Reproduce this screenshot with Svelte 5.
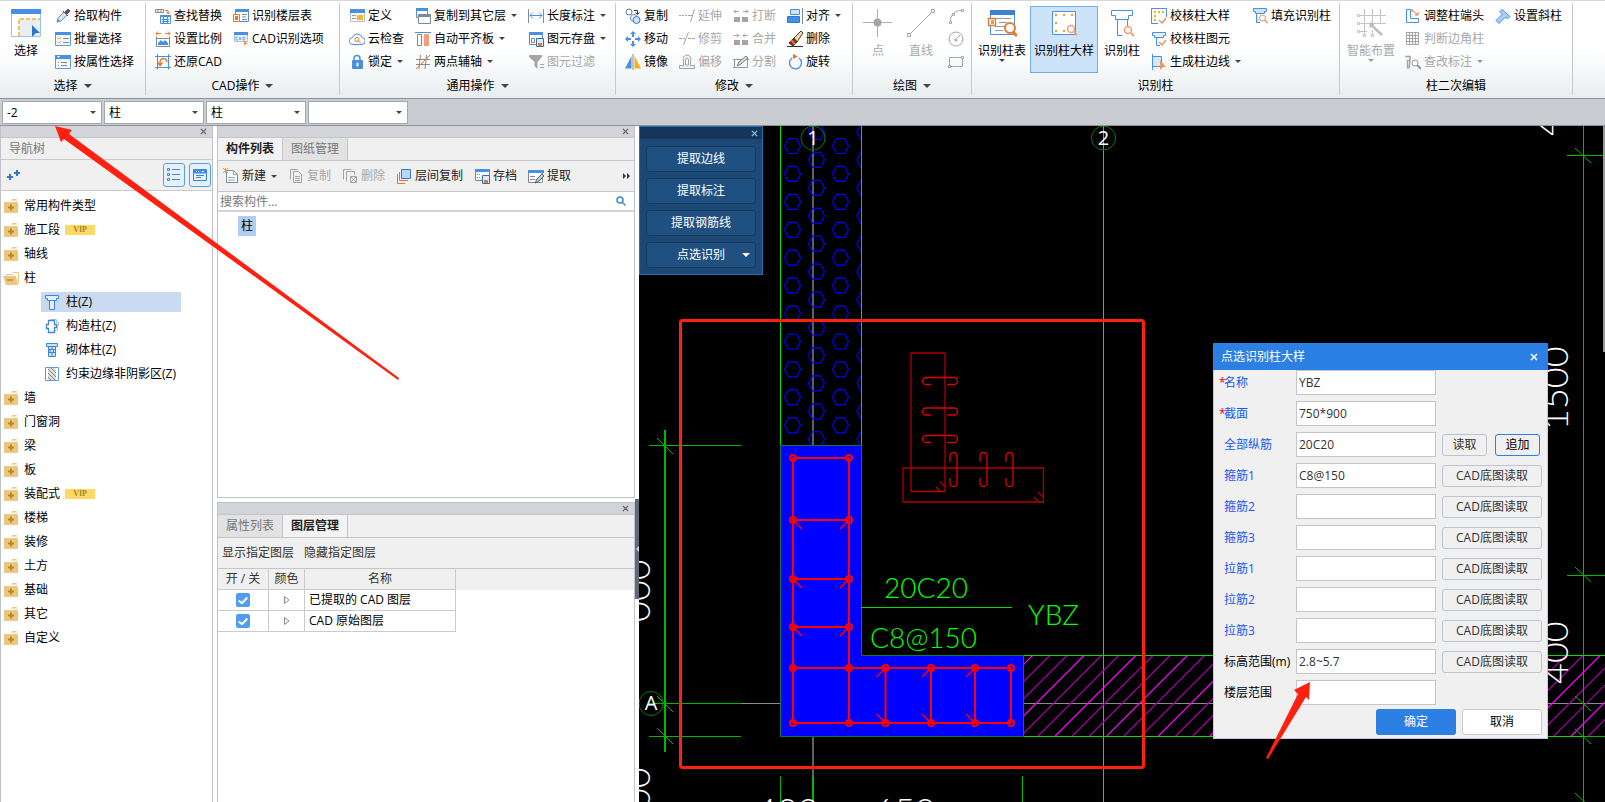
<script lang="ts">
  type Tool = { icon: string; label: string; caret?: boolean; off?: boolean; on?: boolean; w?: number };
  type Group = { title: string; caret?: boolean; w: number; big: Tool[]; cols: Tool[][] };

  // icon artwork, 16x16 unless listed with the 30x30 ones
  const icons: Record<string, string> = {
    picker: `<path d="M2 14l1-4 6-6 3 3-6 6z" fill="#d6e6f5" stroke="#7d8b99"/><path d="M2 14l1-3 2 2z" fill="#4a90e2"/><path d="M8 3l5 5M10 4l3-3 2 2-3 3z" stroke="#555" fill="#555"/>`,
    batch: `<path d="M.5 1.5h15v13H.5z" fill="#f4f9ff" stroke="#5b9bd9"/><path d="M0 1h16v3H0z" fill="#4a90e2"/><path d="M2.5 7l1.2 1.2L6 6M2.5 11l1.2 1.2L6 10" fill="none" stroke="#f0a030"/><path d="M8 7.5h6M8 11.5h6" stroke="#888"/>`,
    attr: `<path d="M.5 1.5h15v13H.5z" fill="#f4f9ff" stroke="#5b9bd9"/><path d="M0 1h16v4H0z" fill="#4a90e2"/><path d="M2 2l1.5 2L5 2z" fill="#fff"/><path d="M3 8.500h1M3 11.500h1M6 8.500h6M6 11.500h6" stroke="#888"/>`,
    find: `<path d="M.5 1.500h8v3h-8zM3 1.500v3M6 1.500v3" fill="none" stroke="#888"/><path d="M10 2.500h3v3M11.500 4l1.500 2 1.500-2" fill="none" stroke="#e8792c"/><path d="M5.500 7.500h10v8h-10z" fill="#eaf3fd" stroke="#4a90e2"/><path d="M5 7h11v2H5z" fill="#4a90e2"/><path d="M7 11.500h7M7 13.500h7M8.500 9v6M12.500 9v6" stroke="#4a90e2"/>`,
    scale: `<path d="M1 2.500h5M3 .5l-2 2 2 2M10 2.500h5M13 .5l2 2-2 2" fill="none" stroke="#e8792c"/><path d="M1.500 5.500v10h13v-10M1.500 7.500h13" fill="none" stroke="#7d8b99"/><path d="M3 14v-2l3-3 2 2 2-2 3 3v2z" fill="#4a90e2"/>`,
    restore: `<path d="M2.500 0v15.500M13.500 0v15.500M0 2.500h16M0 13.500h16" stroke="#4a90e2" fill="none"/><path d="M5 10V8a3.500 3.500 0 0 1 7 0M2.500 8.500L5 11.500l2.500-3" fill="none" stroke="#e8792c" stroke-width="1.500"/>`,
    floor: `<path d="M2.500 1.500h13v12h-13z" fill="#fff" stroke="#4a90e2"/><path d="M2 1h14v3H2z" fill="#4a90e2"/><path d="M.5 6.500h6v7h-6z" fill="#fff" stroke="#e8792c"/><path d="M2 8h3v4H2z" fill="#e8792c"/><path d="M9 6.500h5M9 9h4M9 11.500h5" stroke="#888"/>`,
    cadopt: `<path d="M1.500 1.500h13v9h-13z" fill="#eef5fd" stroke="#9cc3ee"/><path d="M1 1h14v3H1z" fill="#4a90e2"/><path d="M5 6H3v3h2M6 9l1-3 1 3M10 6v3c3 0 3-3 0-3" fill="none" stroke="#7aa9d9"/><path d="M11 9l4 4h-2l-2 2z" fill="#f4935f"/>`,
    define: `<path d="M1.500 2.500h14v11h-14z" fill="#f7f7f7" stroke="#b5bcc4"/><path d="M1 1h15v4H1z" fill="#4a90e2"/><path d="M3 7.500h4M3 10.500h4" stroke="#999"/><path d="M8 7h6v5H8z" fill="#f7b733"/>`,
    cloud: `<path d="M4 13.500a3.500 3.500 0 0 1-.5-7A5 5 0 0 1 13 6.500a3.500 3.500 0 0 1-.5 7z" fill="#fff" stroke="#4a90e2"/><circle cx="8" cy="8.500" r="2" fill="none" stroke="#e8792c"/><path d="M9.500 10l2.500 2.500" stroke="#e8792c"/>`,
    lock: `<path d="M5 8V4.500a3 3 0 0 1 6 0V8" fill="none" stroke="#4a90e2" stroke-width="1.500"/><rect x="3" y="6" width="11" height="9" rx="1" fill="#4a90e2"/><path d="M8 9h1v3H8z" fill="#fff" stroke="#fff"/>`,
    copyfloor: `<path d="M1.500.5h11v9h-11z" fill="#fff" stroke="#4a90e2"/><path d="M1 0h12v3H1z" fill="#4a90e2"/><path d="M3.500 6.500h12v9h-12z" fill="#fff" stroke="#7d8b99"/><path d="M3 6h13v3H3z" fill="#7d8b99"/>`,
    flush: `<path d="M0 1.500h16" stroke="#4a90e2"/><path d="M2.500 3.500h4v11h-4z" fill="#fff" stroke="#888"/><path d="M9 3h5v12H9z" fill="#f99b74"/>`,
    axis: `<path d="M1 5.500h14M1 10.500h14M5.500 1L4 15M11.500 1L10 15" stroke="#888" fill="none"/><path d="M1 15L15 1" stroke="#e8792c"/>`,
    length: `<path d="M.5 1v14M15.500 1v14" stroke="#7d8b99"/><path d="M2 7.500h12M5 4.500l-3 3 3 3M11 4.500l3 3-3 3" fill="none" stroke="#4a90e2"/>`,
    save: `<path d="M1.500 1.500h13v12h-13z" fill="#fff" stroke="#4a90e2"/><path d="M1 1h14v3H1z" fill="#4a90e2"/><path d="M3.500 7.500h3v4h-3z" fill="none" stroke="#888"/><path d="M8.500 7.500h7v8h-7z" fill="#dcebfa" stroke="#2f6fb5"/><path d="M10 12h4v3h-4z" fill="#e8792c"/>`,
    filter: `<path d="M1 1h13v2L9.500 8v7l-3-3V8L1 3z" fill="#a5a5a5"/><path d="M12 10.500h4M12 13.500h4" stroke="#a5a5a5"/>`,
    copy: `<circle cx="4" cy="4" r="3" fill="#fff" stroke="#777"/><path d="M9 2.500h3.500V6M10.500 4.500l2 2 2-2" fill="none" stroke="#333"/><circle cx="9" cy="10" r="3.500" fill="#fff" stroke="#4a90e2"/><circle cx="11.500" cy="12" r="3.500" fill="#cfe3fa" stroke="#2f78c8"/>`,
    move: `<path d="M8 0l3 3H9v3H7V3H5zM8 16l3-3H9v-3H7v3H5zM0 8l3-3v2h3v2H3v2zM16 8l-3-3v2h-3v2h3v2z" fill="#4a90e2"/>`,
    mirror: `<path d="M6.500 2v12.500H0z" fill="#4a90e2"/><path d="M9.500 2v12.500H16z" fill="#f7b021"/><path d="M8 0v16" stroke="#888"/>`,
    extend: `<path d="M0 7.500h9" stroke="#a5a5a5" stroke-dasharray="2 1"/><path d="M9 7.500h5M15.500 1l-4 13" stroke="#a5a5a5"/>`,
    trim: `<path d="M0 7.500h6M9 7.500h7" stroke="#a5a5a5" stroke-dasharray="3 1"/><path d="M9.500 1l-5 13" stroke="#a5a5a5"/>`,
    offset: `<path d="M.5 11.500h4V7a4 4 0 1 1 7 0v4.500h4v3H.5z" fill="#eee" stroke="#a5a5a5"/><path d="M6.500 11V6a1.500 1.500 0 0 1 3 0v5z" fill="#fff" stroke="#a5a5a5"/>`,
    breakit: `<path d="M1 9h6v5H1zM9 9h6v5H9z" fill="#a5a5a5"/><path d="M1 3.500h5M3 1.500l-2 2 2 2M10 3.500h5M13 1.500l2 2-2 2" fill="none" stroke="#a5a5a5"/>`,
    merge: `<path d="M1 9h6v5H1zM9 9h6v5H9z" fill="#a5a5a5"/><path d="M1 4.500h5M4 2.500l2 2-2 2M10 4.500h5M12 2.500l-2 2 2 2" fill="none" stroke="#a5a5a5"/>`,
    split: `<path d="M1.500 5.500h13v8h-13zM0 5.500h3M0 13.500h3M13 5.500h3" fill="none" stroke="#999"/><path d="M4 12l2-4 7-6 2 2-7 6z" fill="#ddd" stroke="#777"/>`,
    align: `<path d="M3.500 1.500h9v5h-9z" fill="#cfe3fa" stroke="#4a90e2"/><path d="M.5 8.500h12v6H.5z" fill="#4a90e2" stroke="#2f78c8"/><path d="M15.500 0v16" stroke="#7d8b99"/>`,
    erase: `<path d="M6 8l8-8 2 2-6 9z" fill="#f3d9a5" stroke="#443"/><path d="M2 12l5-5 3 4-4 4z" fill="#8d2d1a" stroke="#333"/><path d="M4 9l4 4" stroke="#e8792c" stroke-width="2"/><path d="M0 15.500h16" stroke="#333"/>`,
    rotate: `<path d="M5 4a6 6 0 1 0 7 0" fill="none" stroke="#4a90e2" stroke-width="1.300"/><path d="M6 0l5 2.500L6 5z" fill="#e8792c"/>`,
    arc: `<path d="M2.500 13.500C2.500 7 6 2.500 13.500 2.500" fill="none" stroke="#a5a5a5"/><path d="M1.500 13.500h2v2h-2zM4.500 5.500h2v2h-2zM13.500 1.500h2v2h-2z" fill="#fff" stroke="#a5a5a5"/>`,
    circle: `<circle cx="8" cy="8" r="7" fill="none" stroke="#a5a5a5"/><path d="M7 8h2v2H7zM9 7l3-3" fill="#fff" stroke="#a5a5a5"/>`,
    rect: `<path d="M1.500 3.500h13v9h-13z" fill="none" stroke="#a5a5a5"/><path d="M.5 11.500h2v2h-2zM13.500 2.500h2v2h-2z" fill="#fff" stroke="#a5a5a5"/>`,
    checkdetail: `<path d="M.5.5h15v15H.5z" fill="#fff"/><path d="M15.500 9V.5H.5v15H7" fill="none" stroke="#4a90e2"/><path d="M3 3h2v2H3zM7 3h2v2H7zM11 3h2v2h-2zM3 7h2v2H3zM3 11h2v2H3z" fill="#f7b021"/><path d="M8 12l3 3 4-5" fill="none" stroke="#f4935f" stroke-width="1.500"/>`,
    checkcol: `<path d="M1.500 1.500h13v3h-2v2h-9v-2h-2zM5.500 6.500v8H9" fill="#eaf3fd" stroke="#4a90e2"/><path d="M8 11l3 3 4-5" fill="none" stroke="#f4935f" stroke-width="1.500"/>`,
    edge: `<path d="M1.500 0v16M1.500 2.500h9v10h-9" fill="#d6e8fb" stroke="#4a90e2"/><path d="M9 6l6 7h-3l-3 3z" fill="#f4935f"/>`,
    fillcol: `<path d="M1.500.5h13v3h-2v2h-9v-2h-2zM4.500 5.500v9H8" fill="#cfe3fa" stroke="#4a90e2"/><circle cx="10.500" cy="10" r="3" fill="#fff" stroke="#f4935f"/><path d="M12.500 12l3 3" stroke="#f4935f" stroke-width="1.500"/>`,
    colend: `<path d="M1.500 1.500h4v9h8v4h-12z" fill="#fff" stroke="#4a90e2"/><path d="M7 2l6 5M7 1v3M13 4v3h-3" stroke="#e8792c" fill="none"/>`,
    corner: `<path d="M1.500 1.500h12v12h-12zM4.500 1.500v12M7.500 1.500v12M10.500 1.500v12M1.500 4.500h12M1.500 7.500h12M1.500 10.500h12" fill="none" stroke="#a5a5a5"/>`,
    modify: `<path d="M0 2.500h5v4H2.500v8M5 6.500l-1 8" fill="none" stroke="#a5a5a5" stroke-width="1.500"/><circle cx="10" cy="9" r="3" fill="#fff" stroke="#999"/><path d="M12 11l4 4" stroke="#999" stroke-width="2"/>`,
    slant: `<path d="M7 1.500l8 7-2 2-3-1-6 6-3-3 6-6-2-3z" fill="#a9cdf5" stroke="#4a90e2"/>`,
    newdoc: `<path d="M3.500 2.500h7l4 4v8h-11z" fill="#fff" stroke="#7d8b99"/><path d="M10.500 2.500v4h4M5 9.500h7M5 12h7" fill="none" stroke="#9aa5b0"/><path d="M0 0l5 5M5 0L0 5M2.500 0v5" stroke="#f0a030"/>`,
    copydoc: `<path d="M2.500 11.500v-10h7M5.500 3.500h5l3 3v8h-8zM7 8.500h5M7 10.500h5M7 12.500h5" fill="none" stroke="#a5a5a5"/>`,
    deldoc: `<path d="M1.500 11.500v-10h8M4.500 13.500v-10h8v3" fill="none" stroke="#a5a5a5"/><path d="M8.500 8.500h6v6h-6zM9 9l5 5M14 9l-5 5" fill="none" stroke="#a5a5a5"/>`,
    between: `<path d="M5.500 1.500h9v9h-9z" fill="#b9d8f8" stroke="#2f78c8"/><path d="M3.500 4v8.500H12M1.500 6v9.500H9" fill="none" stroke="#e8792c"/>`,
    archive: `<path d="M1.500 1.500h14v11h-14z" fill="#fff" stroke="#4a90e2"/><path d="M1 1h15v3H1z" fill="#4a90e2"/><path d="M3 6.500h4M3 9.500h4" stroke="#888" stroke-dasharray="1 1"/><path d="M8.500 7.500h7v8h-7z" fill="#dcebfa" stroke="#2f6fb5"/><path d="M10 12h4v3h-4z" fill="#e8792c"/>`,
    extract: `<path d="M.5 3.500h14v11H.5z" fill="#fff" stroke="#7d8b99"/><path d="M0 2h16v3H0z" fill="#4a90e2"/><path d="M2 8.500h5M2 11.500h5" stroke="#888"/><path d="M7 15l2-4 5-5 2 2-5 5z" fill="#a9dce8" stroke="#555"/>`,
    folder: `<path d="M8 2.500q0-1.500 3-1.500 4 0 3 1.500z" fill="#e6bd76"/><rect x="1" y="4" width="14" height="11" rx="1" fill="#ecc67f"/><path d="M8 6.500v6M5 9.500h6" stroke="#b98a2a" stroke-width="2"/>`,
    opened: `<path d="M3.500 13V4.500h6l1-2h5v11" fill="#fff" stroke="#ecc67f"/><path d="M0 6h13l2 9H3z" fill="#ecc67f"/><path d="M4 10h6" stroke="#b98a2a" stroke-width="1.500"/>`,
    column: `<path d="M1.500 1.500h13v3h-2v2h-9v-2h-2zM5.500 6.500v9h5v-9" fill="#e1eefb" stroke="#3f86d6"/>`,
    structcol: `<path d="M6.500 1.500h6v3h2v3h-1v5h-3" fill="none" stroke="#9cc3ee"/><path d="M4.500 2.500h6v4h2v3h-2v5h-6v-4h-2v-4h2z" fill="#fff" stroke="#3f86d6" stroke-width="1.300"/>`,
    masonry: `<path d="M2.500 1.500h11v3h-11zM4.500 4.500v10h7v-10M4.500 7.500h7M4.500 10.500h7M8 4.500v3M6 7.500v3M9.500 7.500v3M8 10.500v4" fill="#cfe3fa" stroke="#3f86d6"/>`,
    hatched: `<path d="M1.500 1.500h13v13h-13z" fill="#fff" stroke="#5b9bd9"/><path d="M4 2h8v12H4z" fill="#ddd"/><path d="M4 3l8 8M4 7l7 7M4 11l3 3M7 2l5 5" stroke="#888"/>`,
  };

  const bigIcons: Record<string, string> = {
    select: `<path d="M.5 1.500h29v27H.5z" fill="#fff" stroke="#9cc3ee"/><path d="M0 1h30v5H0z" fill="#4a90e2"/><path d="M8 11h21v17H8z" fill="#e9edf4"/><path d="M8 28V11h21" fill="none" stroke="#f7b021" stroke-width="1.500" stroke-dasharray="4 2"/><path d="M21 17l8 8h-4l-4 4z" fill="#2f78c8"/>`,
    point: `<path d="M14.500 1v11M14.500 18v11M0 14.500h11M18 14.500h11" stroke="#b0b0b0"/><circle cx="14.500" cy="14.500" r="4" fill="#a5a5a5"/>`,
    line: `<path d="M3 27L27 3" stroke="#a5a5a5"/><path d="M1.500 25.500h3v3h-3zM25.500 1.500h3v3h-3z" fill="#fff" stroke="#a5a5a5"/>`,
    coltable: `<path d="M3.500 2.500h24v24h-24z" fill="#fff" stroke="#4a90e2"/><path d="M3 2h25v5H3z" fill="#3f80cf"/><path d="M9 10.500h15M12 14.500h8M8 18.500h10M8 22.500h8" stroke="#999"/><path d="M1.500 10.500h7v7h-7zM4 13h3M4 15h3" fill="#fff" stroke="#e8792c" stroke-width="1.300"/><circle cx="23" cy="20" r="5" fill="#fff" stroke="#e8792c" stroke-width="2"/><path d="M26 24l4 4" stroke="#e8792c" stroke-width="3"/>`,
    coldetail: `<path d="M3.500 3.500h23v23h-23z" fill="#fff" stroke="#4a90e2"/><path d="M6 6h2v2H6zM14 6h2v2h-2zM22 6h2v2h-2zM6 14h2v2H6zM6 22h2v2H6zM14 22h2v2h-2z" fill="#f0a030"/><circle cx="22" cy="21" r="3.500" fill="#fff" stroke="#f99b74" stroke-width="1.500"/><path d="M25 24l3 3" stroke="#f99b74" stroke-width="2"/>`,
    colbig: `<path d="M4.500 2.500h21v5h-4v4h-13v-4h-4z" fill="#fff" stroke="#4a90e2"/><path d="M10.500 11.500v16h5M20.500 11.500v7" fill="none" stroke="#4a90e2"/><circle cx="21" cy="22" r="3.500" fill="#fff" stroke="#f99b74" stroke-width="1.500"/><path d="M24 25l3 3" stroke="#f99b74" stroke-width="2"/>`,
    smart: `<path d="M3 7.500h27M3 15.500h27M3 23.500h8M8.500 1v26M16.500 1v14M24.500 1v14M16.500 22v5" stroke="#c4c4c4" fill="none"/><path d="M1.500 6.500h2v2h-2zM1.500 14.500h2v2h-2zM1.500 22.500h2v2h-2zM7.500 26.500h2v2h-2zM15.500 26.500h2v2h-2z" fill="#fff" stroke="#c4c4c4"/><path d="M11 15l3 1 1-3 1 3 3-1-1.500 2.500L27 26l-2 2-9-9-3 1 1-3z" fill="#bcbcbc"/>`,
  };

  const t = (icon: string, label: string, extra: Partial<Tool> = {}): Tool => ({ icon, label, ...extra });
  const caret = { caret: true };
  const off = { off: true };

  const groups: Group[] = [
    {
      title: "选择", caret: true, w: 146,
      big: [t("select", "选择", { w: 44 })],
      cols: [[t("picker", "拾取构件"), t("batch", "批量选择"), t("attr", "按属性选择")]],
    },
    {
      title: "CAD操作", caret: true, w: 194, big: [],
      cols: [
        [t("find", "查找替换"), t("scale", "设置比例"), t("restore", "还原CAD")],
        [t("floor", "识别楼层表"), t("cadopt", "CAD识别选项")],
      ],
    },
    {
      title: "通用操作", caret: true, w: 276, big: [],
      cols: [
        [t("define", "定义"), t("cloud", "云检查"), t("lock", "锁定", caret)],
        [t("copyfloor", "复制到其它层", caret), t("flush", "自动平齐板", caret), t("axis", "两点辅轴", caret)],
        [t("length", "长度标注", caret), t("save", "图元存盘", caret), t("filter", "图元过滤", off)],
      ],
    },
    {
      title: "修改", caret: true, w: 237, big: [],
      cols: [
        [t("copy", "复制"), t("move", "移动"), t("mirror", "镜像")],
        [t("extend", "延伸", off), t("trim", "修剪", off), t("offset", "偏移", off)],
        [t("breakit", "打断", off), t("merge", "合并", off), t("split", "分割", off)],
        [t("align", "对齐", caret), t("erase", "删除"), t("rotate", "旋转")],
      ],
    },
    {
      title: "绘图", caret: true, w: 119,
      big: [t("point", "点", { off: true, w: 42 }), t("line", "直线", { off: true, w: 40 })],
      cols: [[t("arc", "", off), t("circle", "", off), t("rect", "", off)]],
    },
    {
      title: "识别柱", w: 368,
      big: [
        t("coltable", "识别柱表", { caret: true, w: 52 }),
        t("coldetail", "识别柱大样", { on: true, w: 68 }),
        t("colbig", "识别柱", { w: 44 }),
      ],
      cols: [
        [t("checkdetail", "校核柱大样"), t("checkcol", "校核柱图元"), t("edge", "生成柱边线", caret)],
        [t("fillcol", "填充识别柱")],
      ],
    },
    {
      title: "柱二次编辑", w: 233,
      big: [t("smart", "智能布置", { off: true, caret: true, w: 54 })],
      cols: [
        [t("colend", "调整柱端头"), t("corner", "判断边角柱", off), t("modify", "查改标注", { off: true, caret: true })],
        [t("slant", "设置斜柱")],
      ],
    },
  ];

  const combos = ["-2", "柱", "柱", ""];

  const tree = [
    { label: "常用构件类型" }, { label: "施工段", vip: true }, { label: "轴线" },
    {
      label: "柱", open: true,
      kids: [
        { icon: "column", label: "柱(Z)", on: true },
        { icon: "structcol", label: "构造柱(Z)" },
        { icon: "masonry", label: "砌体柱(Z)" },
        { icon: "hatched", label: "约束边缘非阴影区(Z)" },
      ],
    },
    { label: "墙" }, { label: "门窗洞" }, { label: "梁" }, { label: "板" }, { label: "装配式", vip: true },
    { label: "楼梯" }, { label: "装修" }, { label: "土方" }, { label: "基础" }, { label: "其它" }, { label: "自定义" },
  ];

  const listTools = [
    t("newdoc", "新建", caret), t("copydoc", "复制", off), t("deldoc", "删除", off),
    t("between", "层间复制"), t("archive", "存档"), t("extract", "提取"),
  ];

  let layers = $state([
    { name: "已提取的 CAD 图层", on: true },
    { name: "CAD 原始图层", on: true },
  ]);

  let fields = $state([
    { label: "名称", value: "YBZ", req: true, read: "" },
    { label: "截面", value: "750*900", req: true, read: "" },
    { label: "全部纵筋", value: "20C20", read: "pair" },
    { label: "箍筋1", value: "C8@150", read: "cad" },
    { label: "箍筋2", value: "", read: "cad" },
    { label: "箍筋3", value: "", read: "cad" },
    { label: "拉筋1", value: "", read: "cad" },
    { label: "拉筋2", value: "", read: "cad" },
    { label: "拉筋3", value: "", read: "cad" },
    { label: "标高范围(m)", value: "2.8~5.7", dark: true, read: "cad" },
    { label: "楼层范围", value: "", dark: true, read: "" },
  ]);

  // hexagon hatch of the wall: four staggered columns
  const hexes: [number, number][] = [];
  for (let i = 0; i < 12; i++) {
    const y = 132 + i * 27.93;
    hexes.push([816.5, y], [865, y]);
    if (i < 11) hexes.push([792.5, y + 14], [840.5, y + 14]);
  }

  const hatch = Array.from({ length: 40 }, (_, i) => 952 + i * 17.2);
  const leftBars = [458, 520, 579, 627];
  const footBars = [885.5, 931, 975];
  const nodes: [number, number][] = [
    ...[458, 520, 579, 627, 668, 723].flatMap((y): [number, number][] => [[793, y], [849, y]]),
    ...[885.5, 931, 975, 1011].flatMap((x): [number, number][] => [[x, 668], [x, 723]]),
  ];
</script>

{#snippet icon(name: string)}
  <svg class="ico" viewBox="0 0 16 16" aria-hidden="true">{@html icons[name]}</svg>
{/snippet}

{#snippet closeX()}
  <button class="x" aria-label="关闭">
    <svg viewBox="0 0 8 8"><path d="M1 1l6 6M7 1l-6 6" /></svg>
  </button>
{/snippet}

<div class="app">
  <header class="ribbon">
    {#each groups as g}
      <section class="group" style:width="{g.w}px">
        <div class="tools">
          {#each g.big as b}
            <button class="big" class:off={b.off} class:on={b.on} disabled={b.off} style:width="{b.w}px">
              <svg class="bigico" viewBox="0 0 30 30" aria-hidden="true">{@html bigIcons[b.icon]}</svg>
              <span>{b.label}</span>
              {#if b.caret}<i class="caret"></i>{/if}
            </button>
          {/each}
          <div class="cols">
            {#each g.cols as col}
              <div class="col">
                {#each col as b}
                  <button class="tool" class:off={b.off} disabled={b.off} aria-label={b.label || b.icon}>
                    {@render icon(b.icon)}
                    {#if b.label}<span>{b.label}</span>{/if}
                    {#if b.caret}<i class="caret"></i>{/if}
                  </button>
                {/each}
              </div>
            {/each}
          </div>
        </div>
        <div class="gtitle">{g.title}{#if g.caret}<i class="caret wide"></i>{/if}</div>
      </section>
    {/each}
  </header>

  <div class="combos">
    {#each combos as c}
      <div class="combo">
        <select aria-label="筛选"><option>{c}</option></select>
        <i class="caret"></i>
      </div>
    {/each}
  </div>

  <main class="work">
    <aside class="nav">
      <div class="strip">{@render closeX()}</div>
      <div class="navtitle">导航树</div>
      <div class="navbar">
        <svg class="plus" viewBox="0 0 14 12"><path d="M0 8h6M3 5v6M7 4h6M10 1v6" /></svg>
        <button class="view" aria-label="列表">
          <svg viewBox="0 0 14 14"><path d="M.5.5h2v2h-2zM.5 5.500h2v2h-2zM.5 10.500h2v2h-2zM5 1.500h8M5 6.500h8M5 11.500h8" /></svg>
        </button>
        <button class="view" aria-label="窗口">
          <svg viewBox="0 0 14 14"><path d="M.5 1.500h13v11H.5zM3 7.500h8M3 9.500h5" /><path class="solid" d="M1 2h12v3H1z" /><path class="dots" d="M3 3.500h1M5 3.500h1M9 3.500h2" /></svg>
        </button>
      </div>
      <ul class="tree">
        {#each tree as n}
          <li>
            <div class="node">
              {@render icon(n.open ? "opened" : "folder")}
              <span>{n.label}</span>
              {#if n.vip}<b class="vip">VIP</b>{/if}
            </div>
            {#if n.kids}
              <ul>
                {#each n.kids as k}
                  <li class="kid" class:on={k.on}>{@render icon(k.icon)}<span>{k.label}</span></li>
                {/each}
              </ul>
            {/if}
          </li>
        {/each}
      </ul>
    </aside>

    <div class="mid">
      <section class="panel list">
        <div class="strip">{@render closeX()}</div>
        <div class="tabs">
          <button class="tab cur">构件列表</button><button class="tab">图纸管理</button>
        </div>
        <div class="listbar">
          {#each listTools as b}
            <button class="tool" class:off={b.off} disabled={b.off}>
              {@render icon(b.icon)}<span>{b.label}</span>
              {#if b.caret}<i class="caret"></i>{/if}
            </button>
          {/each}
          <svg class="more" viewBox="0 0 8 6"><path d="M0 0l3 3-3 3zM4 0l3 3-3 3z" /></svg>
        </div>
        <div class="search">
          <input type="text" placeholder="搜索构件..." aria-label="搜索构件" />
          <svg viewBox="0 0 10 10"><circle cx="4" cy="4" r="3" /><path d="M6.500 6.500l3 3" /></svg>
        </div>
        <div class="items"><span class="item">柱</span></div>
      </section>

      <section class="panel props">
        <div class="strip">{@render closeX()}</div>
        <div class="tabs">
          <button class="tab">属性列表</button><button class="tab cur">图层管理</button>
        </div>
        <div class="layerbar">
          <button>显示指定图层</button><button>隐藏指定图层</button>
        </div>
        <div class="tablewrap">
          <table>
            <thead><tr><th class="c1">开 / 关</th><th class="c2">颜色</th><th class="c3">名称</th></tr></thead>
            <tbody>
              {#each layers as l}
                <tr>
                  <td><input type="checkbox" bind:checked={l.on} aria-label={l.name} /></td>
                  <td><svg class="tri" viewBox="0 0 6 8"><path d="M.5.5L5 4 .5 7.500z" /></svg></td>
                  <td class="name">{l.name}</td>
                </tr>
              {/each}
            </tbody>
          </table>
        </div>
      </section>
    </div>

    <div class="split"><button class="grip" aria-label="收起"><i></i></button></div>

    <div class="cad">
      <svg class="drawing" viewBox="639 126 966 676" preserveAspectRatio="xMinYMin slice">
        <defs>
          <clipPath id="wall"><path d="M781 126h80v319h-80z" /></clipPath>
          <clipPath id="beam"><path d="M1024 655h581v81h-581z" /></clipPath>
        </defs>

        <!-- axes -->
        <g class="grey">
          <path d="M813 126V802" stroke-width="2" />
          <path class="light" d="M1103.500 126V802M740 703.500H1605" />
        </g>

        <g clip-path="url(#wall)" class="hex">
          {#each hexes as [x, y]}
            <path d="M{x - 8} {y}l4-7.500h8l4 7.500-4 7.500h-8z" />
          {/each}
        </g>
        <path class="lime" d="M780.500 126V445M861.500 126V445" />

        <g clip-path="url(#beam)" class="magenta">
          {#each hatch as x, i}
            <path class:bright={i % 3 === 0} d="M{x} 736l81-81" />
          {/each}
        </g>
        <path class="lime" d="M1023 655.500H1605M1023 736.500H1605" />

        <!-- column section -->
        <path class="ell" d="M780.500 445.500h81v210h162v81h-243z" />
        <g class="bar">
          <path d="M793 458V723M849 458V723M793 668H1011M793 723H1011M1011 668V723" />
          {#each leftBars as y, i}
            <path d="M793 {y}H849" />
            {#if i > 0}<path class="hook" d="M793 {y}l9 9M849 {y}l-9 9" />{/if}
          {/each}
          {#each footBars as x}
            <path d="M{x} 668V723" />
            <path class="hook" d="M{x} 668l-9 9M{x} 723l-9-9" />
          {/each}
          {#each nodes as [x, y]}<circle cx={x} cy={y} r="3" />{/each}
        </g>

        <!-- stirrup detail -->
        <g class="detail">
          <path d="M911 353h34v138.500h-34zM903 468h140.500v34H903zM936 487l4 4M940 482l5 5M1034 497l5 5M1038 492l5 5" />
          {#each [377.5, 408, 435.500] as y}
            <path class="tie" d="M931 {y + 7}h-5a3.500 3.500 0 0 1 0-7h28a3.500 3.500 0 0 1 0 7h-7" />
          {/each}
          {#each [950, 980, 1006] as x}
            <path class="tie" d="M{x} 462v-6a3.500 3.500 0 0 1 7 0v27a3.500 3.500 0 0 1-7 0v-5" />
          {/each}
        </g>

        <g class="note">
          <text x="884" y="598">20C20</text>
          <text x="870" y="648">C8@150</text>
          <text x="1028" y="625">YBZ</text>
        </g>
        <path class="lime" d="M861 607.500H1012" />

        <!-- dimension lines -->
        <g class="dim">
          <path d="M665 430V752" stroke-width="2" />
          <path d="M649 445.500H741M649 703.500H741M649 736.500H741" />
          <path d="M657 438l16 16M657 696l16 16M657 728l16 16" />
          <path d="M780.500 776V802M1022.500 776V802" />
          <path d="M813 776V802" stroke-width="2" />
          <path d="M1583.500 126V802M1567 155.500H1605M1567 575.500H1605M1583 736.500H1605" />
          <path d="M1575 148l16 15M1575 567l16 15M1575 696l16 15M1575 729l16 15M1575 793l16 15" />
        </g>

        <g class="axis">
          <circle cx="813" cy="138" r="12" /><circle cx="1103.500" cy="138" r="12" /><circle cx="651" cy="703.500" r="12" />
          <text x="813" y="145">1</text><text x="1103.500" y="145">2</text><text x="651" y="710">A</text>
        </g>
        <g class="size">
          <text transform="translate(650 622) rotate(-90)">000</text>
          <text transform="translate(650 830) rotate(-90)">000</text>
          <text transform="translate(1568 430) rotate(-90)">1500</text>
          <text transform="translate(1568 684) rotate(-90)">400</text>
          <text transform="translate(1560 136) rotate(-90)">4</text>
          <text x="756" y="824">400</text>
          <text x="873" y="824">650</text>
        </g>
      </svg>
      <div class="vscroll"></div>

      <div class="pick">
        <div class="pickhead">{@render closeX()}</div>
        <div class="pickbody">
          <button>提取边线</button>
          <button>提取标注</button>
          <button>提取钢筋线</button>
          <button class="drop"><span>点选识别</span><i class="caret wide"></i></button>
        </div>
      </div>

      <form class="dialog" onsubmit={(e) => e.preventDefault()}>
        <div class="dhead">点选识别柱大样 {@render closeX()}</div>
        <div class="rows">
          {#each fields as f, i}
            <div class="row">
              <label for="f{i}" class:dark={f.dark}><em>{f.req ? "*" : ""}</em>{f.label}</label>
              <input id="f{i}" type="text" bind:value={f.value} />
              {#if f.read === "cad"}
                <button type="button" class="read">CAD底图读取</button>
              {:else if f.read === "pair"}
                <div class="pair">
                  <button type="button" class="read">读取</button>
                  <button type="button" class="read add">追加</button>
                </div>
              {/if}
            </div>
          {/each}
        </div>
        <div class="foot">
          <button class="ok">确定</button>
          <button type="button" class="cancel">取消</button>
        </div>
      </form>
    </div>
  </main>

  <!-- red annotations over the whole window -->
  <svg class="marks" viewBox="0 0 1605 802" preserveAspectRatio="xMinYMin slice" aria-hidden="true">
    <path d="M55 126l17 4-3 4 330 244-1 2L64 139l-3 3z" />
    <path d="M1310 682l-16 8 4 4-32 64 2 1 38-62 3 3z" />
    <rect x="680.500" y="320.500" width="463" height="447" rx="2" />
  </svg>
</div>

<style>
  :global(body) {
    margin: 0;
  }
  .app {
    position: relative;
    display: flex;
    flex-direction: column;
    height: 100vh;
    overflow: hidden;
    background: #fff;
    color: #000;
    font: 12px/16px "Open Sans", "Noto Sans CJK SC", sans-serif;
  }
  button,
  input,
  select {
    box-sizing: border-box;
    margin: 0;
    padding: 0;
    border: 0;
    background: none;
    color: inherit;
    font: inherit;
  }
  ul {
    margin: 0;
    padding: 0;
    list-style: none;
  }
  span {
    white-space: nowrap;
  }
  .ico {
    flex: none;
    width: 16px;
    height: 16px;
  }
  .caret {
    flex: none;
    border: solid transparent;
    border-width: 3px 3px 0;
    border-top-color: #444;
  }
  .caret.wide {
    border-width: 4px 4px 0;
  }

  /* ribbon */
  .ribbon {
    display: flex;
    flex: none;
    height: 97px;
    border-top: 1px solid #d8d8dc;
    border-bottom: 1px solid #90949a;
    background: linear-gradient(#fff 50%, #e9edef);
  }
  .group {
    box-sizing: border-box;
    flex: none;
    margin: 2px 0 3px;
    border-right: 1px solid #c6c9cd;
  }
  .tools {
    display: flex;
    gap: 2px;
    height: 71px;
    padding: 1px 0 0 4px;
  }
  .cols {
    display: flex;
    gap: 11px;
    padding-left: 5px;
  }
  .tool {
    display: flex;
    align-items: center;
    gap: 3px;
    height: 23px;
  }
  .tool .caret {
    margin-left: 2px;
  }
  .off {
    color: #a8a8a8;
  }
  .off .caret {
    border-top-color: #999;
  }
  .big {
    display: flex;
    flex: none;
    flex-direction: column;
    align-items: center;
    height: 67px;
    margin-top: 2px;
    border: 1px solid transparent;
  }
  .big.on {
    border-color: #6eaeea;
    background: #cce3fa;
  }
  .bigico {
    flex: none;
    width: 30px;
    height: 30px;
    margin: 1px 0 5px;
  }
  .gtitle {
    display: flex;
    align-items: center;
    justify-content: center;
    gap: 6px;
    height: 22px;
  }

  /* filter combos */
  .combos {
    display: flex;
    flex: none;
    gap: 2px;
    padding: 2px 2px 1px;
    border-bottom: 1px solid #8f9298;
    background: #c9ccd1;
  }
  .combo {
    display: grid;
    box-sizing: border-box;
    align-items: center;
    width: 100px;
    height: 23px;
    border: 1px solid #a5a8ad;
    background: #fff;
  }
  .combo > * {
    grid-area: 1 / 1;
  }
  .combo select {
    width: 100%;
    height: 100%;
    padding: 0 4px;
    appearance: none;
  }
  .combo .caret {
    justify-self: end;
    margin-right: 5px;
    pointer-events: none;
  }

  .work {
    display: flex;
    flex: 1;
    min-height: 0;
  }
  .strip {
    display: flex;
    flex: none;
    align-items: center;
    justify-content: flex-end;
    height: 11px;
    padding-right: 4px;
    border-bottom: 1px solid #c3c5cb;
    background: #d3d4da;
  }
  .x {
    display: flex;
    align-items: center;
    justify-content: center;
    width: 10px;
    height: 10px;
  }
  .x svg {
    width: 7px;
    height: 7px;
    stroke: #666;
    stroke-width: 1.5;
  }

  /* navigation tree */
  .nav {
    box-sizing: border-box;
    flex: none;
    width: 213px;
    border: solid #c0c3c9;
    border-width: 0 1px;
  }
  .navtitle {
    height: 21px;
    padding-left: 8px;
    border-bottom: 1px solid #c8cace;
    background: #f0f0f0;
    color: #777;
    line-height: 21px;
  }
  .navbar {
    display: flex;
    align-items: center;
    gap: 4px;
    height: 30px;
    padding: 0 1px 0 6px;
    border-bottom: 1px solid #c8cace;
    background: #f0f0f0;
  }
  .plus {
    width: 14px;
    height: 12px;
    margin-right: auto;
    stroke: #2f78c8;
    stroke-width: 2;
  }
  .view {
    display: flex;
    align-items: center;
    justify-content: center;
    width: 22px;
    height: 24px;
    border: 1px solid #56a0ea;
    border-radius: 3px;
    background: #e6f1fc;
  }
  .view svg {
    width: 14px;
    height: 14px;
    fill: none;
    stroke: #3f86d6;
  }
  .view .solid {
    fill: #4a90e2;
  }
  .view .dots {
    stroke: #fff;
  }
  .tree {
    padding-top: 3px;
  }
  .node,
  .kid {
    display: flex;
    align-items: center;
    height: 24px;
    padding-left: 2px;
  }
  .node span {
    margin-left: 5px;
  }
  .vip {
    width: 30px;
    height: 10px;
    margin-left: 5px;
    background: #ffd966;
    color: #a8851c;
    font: bold 8px/10px "Liberation Serif", serif;
    text-align: center;
  }
  .kid {
    gap: 6px;
    width: 137px;
    height: 20px;
    margin: 2px 0 2px 40px;
    padding-left: 3px;
  }
  .kid + .kid {
    margin-top: 4px;
  }
  .kid.on {
    background: #c9d9f0;
  }

  /* component list and layers */
  .mid {
    display: flex;
    flex: none;
    flex-direction: column;
    gap: 4px;
    box-sizing: border-box;
    width: 422px;
    padding-left: 4px;
  }
  .panel {
    display: flex;
    flex-direction: column;
    border: solid #c0c3c9;
    border-width: 0 1px 1px;
  }
  .list {
    flex: 372;
    min-height: 0;
  }
  .props {
    flex: 299;
    min-height: 0;
    border-top-width: 1px;
    border-bottom: 0;
  }
  .tabs {
    display: flex;
    height: 22px;
    border-bottom: 1px solid #c3c5cb;
    background: #f0f0f0;
  }
  .tab {
    padding: 0 8px;
    border-right: 1px solid #c3c5cb;
    background: #e2e2e2;
    color: #777;
  }
  .tab.cur {
    background: #f3f3f3;
    color: #222;
    font-weight: bold;
  }
  .listbar {
    display: flex;
    align-items: center;
    gap: 11px;
    height: 30px;
    padding: 0 3px 0 5px;
    border-bottom: 1px solid #c3c5cb;
    background: #f0f0f0;
    color: #222;
  }
  .listbar .off {
    color: #a8a8a8;
  }
  .more {
    width: 8px;
    height: 6px;
    margin-left: auto;
    fill: #333;
  }
  .search {
    display: flex;
    align-items: center;
    height: 18px;
    padding-right: 8px;
    border-bottom: 2px solid #d0d2d6;
  }
  .search input {
    flex: 1;
    height: 18px;
    padding-left: 2px;
    outline: 0;
  }
  .search input::placeholder {
    color: #777;
  }
  .search svg {
    width: 10px;
    height: 10px;
    fill: none;
    stroke: #3f86c6;
    stroke-width: 1.5;
  }
  .items {
    padding: 4px 20px;
  }
  .item {
    display: inline-block;
    padding: 2px 3px;
    background: #b1cdf0;
  }
  .layerbar {
    display: flex;
    gap: 10px;
    height: 30px;
    padding-left: 4px;
    border-bottom: 1px solid #c3c5cb;
    background: #f0f0f0;
    color: #333;
  }
  .tablewrap {
    background: linear-gradient(#f0f0f0 21px, #fff 21px);
  }
  table {
    border-collapse: separate;
    border-spacing: 0;
  }
  th,
  td {
    box-sizing: border-box;
    height: 21px;
    padding: 0;
    border: solid #c8cace;
    border-width: 0 1px 1px 0;
    text-align: center;
    vertical-align: middle;
  }
  th {
    color: #333;
    font-weight: normal;
  }
  .c1 {
    width: 51px;
  }
  .c2 {
    width: 36px;
  }
  .c3 {
    width: 151px;
  }
  .name {
    padding-left: 4px;
    text-align: left;
  }
  .tri {
    width: 6px;
    height: 8px;
    fill: #fff;
    stroke: #888;
  }
  td input {
    display: grid;
    place-items: center;
    width: 14px;
    height: 14px;
    margin: 0 auto;
    border-radius: 2px;
    appearance: none;
    background: #4f9df7;
  }
  td input::after {
    content: "";
    width: 10px;
    height: 8px;
    background: #fff;
    clip-path: polygon(10% 40%, 40% 65%, 85% 5%, 100% 25%, 40% 100%, 0 60%);
  }

  .split {
    display: flex;
    flex: none;
    align-items: center;
    width: 4px;
    padding-top: 170px;
  }
  .grip {
    display: grid;
    place-items: center;
    width: 4px;
    height: 100px;
    background: #5e6b78;
  }
  .grip i {
    border: solid transparent;
    border-width: 3px 3px 3px 0;
    border-right-color: #cdd3d9;
  }

  /* CAD view */
  .cad {
    position: relative;
    flex: 1;
    min-width: 0;
    overflow: hidden;
    background: #000;
  }
  .drawing {
    display: block;
    width: 100%;
    height: 100%;
    fill: none;
  }
  .grey {
    stroke: #606060;
  }
  .grey .light {
    stroke: #8c8c8c;
  }
  .hex {
    stroke: #00f;
    stroke-width: 1.2;
  }
  .lime {
    stroke: #00e000;
  }
  .magenta {
    stroke: #a800a8;
    stroke-width: 1.2;
  }
  .magenta .bright {
    stroke: #f0f;
  }
  .ell {
    fill: #00f;
    stroke: #007850;
  }
  .bar {
    stroke: #f00;
    stroke-width: 2;
  }
  .bar .hook {
    stroke-width: 1.5;
  }
  .detail {
    stroke: #b00000;
    stroke-width: 1.3;
  }
  .detail .tie {
    stroke: #e00000;
  }
  .note text {
    fill: #0f0;
    font: 300 28px Lato, "Open Sans", sans-serif;
  }
  .dim {
    stroke: #00b800;
  }
  .axis circle {
    stroke: #007c00;
  }
  .axis text {
    fill: #fff;
    font: 20px "Open Sans", sans-serif;
    text-anchor: middle;
  }
  .size text {
    fill: #fff;
    font: 300 36px Lato, "Open Sans", sans-serif;
  }
  .vscroll {
    position: absolute;
    top: 0;
    right: 0;
    width: 2px;
    height: 226px;
    background: #9a9a9a;
  }

  .pick {
    position: absolute;
    top: 0;
    left: 0;
    box-sizing: border-box;
    width: 124px;
    border: 1px solid #2a6cad;
    background: #1b4874;
    color: #fff;
  }
  .pickhead {
    display: flex;
    align-items: center;
    justify-content: flex-end;
    height: 12px;
    padding-right: 3px;
    background: #14365a;
  }
  .pickhead :global(.x svg) {
    stroke: #8ec0ee;
  }
  .pickbody {
    display: grid;
    gap: 6px;
    padding: 7px 6px 6px;
  }
  .pickbody button {
    height: 26px;
    border: 1px solid #163a5e;
    border-radius: 3px;
    background: #20507f;
  }
  .pickbody .drop {
    display: grid;
    align-items: center;
  }
  .drop > * {
    grid-area: 1 / 1;
  }
  .drop .caret {
    justify-self: end;
    margin-right: 5px;
    border-top-color: #fff;
  }

  .dialog {
    position: absolute;
    top: 217px;
    left: 574px;
    box-sizing: border-box;
    width: 335px;
    border: 1px solid #c3cbe0;
    border-top: 0;
    background: #f0f0f0;
  }
  .dhead {
    display: flex;
    align-items: center;
    justify-content: space-between;
    height: 27px;
    margin: 0 -1px;
    padding: 0 9px 0 8px;
    background: #2d80e3;
    color: #fff;
  }
  .dhead :global(.x svg) {
    width: 8px;
    height: 8px;
    stroke: #fff;
  }
  .rows {
    display: grid;
    gap: 6px;
  }
  .row {
    display: grid;
    grid-template-columns: 77px 140px 1fr;
    align-items: center;
    padding: 0 5px;
  }
  .row label {
    color: #1a56f0;
    white-space: nowrap;
  }
  .row label.dark {
    color: #000;
  }
  .row em {
    display: inline-block;
    width: 5px;
    color: #f00;
    font-style: normal;
  }
  .row input {
    height: 25px;
    padding: 0 2px;
    border: 1px solid #c3c5cb;
    background: #fff;
    color: #333;
  }
  .read {
    width: 100px;
    height: 22px;
    margin-left: 6px;
    border: 1px solid #bcc3d2;
    border-radius: 3px;
    color: #333;
  }
  .pair {
    display: flex;
    gap: 2px;
  }
  .pair .read {
    width: 45px;
  }
  .pair .add {
    border-color: #2d80e3;
    color: #000;
  }
  .foot {
    display: flex;
    justify-content: flex-end;
    gap: 6px;
    padding: 4px 5px 3px;
  }
  .foot button {
    width: 80px;
    height: 26px;
    border-radius: 3px;
  }
  .ok {
    background: #2d80e3;
    color: #fff;
  }
  .cancel {
    border: 1px solid #c8cace;
    background: #fff;
  }

  .marks {
    position: absolute;
    inset: 0;
    width: 100%;
    height: 100%;
    fill: #ff2010;
    pointer-events: none;
  }
  .marks rect {
    fill: none;
    stroke: #ff2010;
    stroke-width: 3;
  }
</style>
